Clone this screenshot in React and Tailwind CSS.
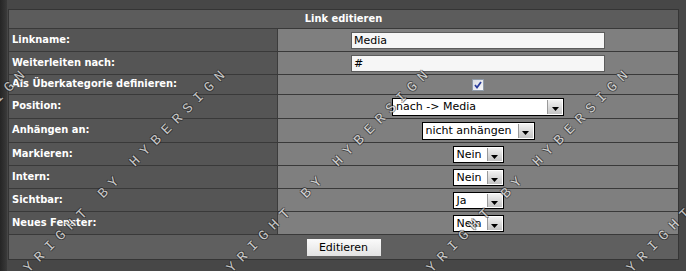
import React from "react";

const Arrow = () => (
  <svg width="7" height="4" viewBox="0 0 7 4" className="mt-[5px]">
    <path d="M0 0H7L3.5 4Z" fill="#000" />
  </svg>
);

const Sel = ({ w, h, text }) => (
  <div className={`flex ${w} ${h} border border-black bg-white`}>
    <span className="flex-1 self-center pl-[3px] text-[11px] leading-none text-black font-['DejaVu_Sans',sans-serif] whitespace-nowrap overflow-hidden">
      {text}
    </span>
    <div className="m-[1px] flex w-[15px] items-center justify-center bg-gradient-to-b from-[#f2f2f2] to-[#c4c4c4] border-l border-[#9a9a9a]">
      <Arrow />
    </div>
  </div>
);

const Row = ({ h, label, children }) => (
  <div className={`flex ${h} border-t border-[#393939]`}>
    <div className="flex w-[268px] items-center bg-[#555555] pl-[3px] text-[11px] font-bold text-white font-['DejaVu_Sans_Condensed','DejaVu_Sans',sans-serif] [font-stretch:condensed]">
      {label}
    </div>
    <div className="flex flex-1 items-center justify-center border-l border-[#3c3c3c] bg-[#7f7f7f]">
      {children}
    </div>
  </div>
);

const Input = ({ value }) => (
  <div className="flex h-[17px] w-[254px] items-center border border-[#5c5c5c] bg-[#f6f6f6] pl-[2px] text-[11px] leading-none text-black font-['DejaVu_Sans',sans-serif]">
    {value}
  </div>
);

const WM = ({ cls }) => (
  <span
    className={`pointer-events-none absolute top-[295px] origin-left -rotate-45 whitespace-nowrap text-[14px] leading-[14px] tracking-[6.6px] text-[#ececec] opacity-75 font-['Liberation_Mono',monospace] [text-shadow:1px_0_0_rgba(20,20,20,0.7),-1px_0_0_rgba(20,20,20,0.7),0_1px_0_rgba(20,20,20,0.7),0_-1px_0_rgba(20,20,20,0.7)] ${cls}`}
  >
    COPYRIGHT BY HYBERSIGN
  </span>
);

export default function App() {
  return (
    <div className="relative flex h-[271px] w-[686px] overflow-hidden bg-[#474747]">
      <div className="w-[7px] bg-gradient-to-r from-[#252525] to-[#3a3a3a]" />
      <div className="pl-[1px] pt-[9px]">
        <div className="flex w-[671px] flex-col border border-[#353535]">
          <div className="flex h-[18px] items-center justify-center bg-[#5c5c5c] text-[11px] font-bold text-white font-['DejaVu_Sans_Condensed','DejaVu_Sans',sans-serif] [font-stretch:condensed]">
            Link editieren
          </div>
          <Row h="h-[23px]" label="Linkname:">
            <Input value="Media" />
          </Row>
          <Row h="h-[23px]" label="Weiterleiten nach:">
            <Input value="#" />
          </Row>
          <Row h="h-[20px]" label="Als Überkategorie definieren:">
            <div className="flex h-[12px] w-[12px] items-center justify-center border border-[#8f9aa8] bg-gradient-to-br from-[#d8dbe2] to-[#f8f8fa]">
              <svg width="8" height="8" viewBox="0 0 8 8">
                <path d="M1 4L3 6.5L7 1" stroke="#2a3c9c" strokeWidth="1.8" fill="none" />
              </svg>
            </div>
          </Row>
          <Row h="h-[24px]" label="Position:">
            <Sel w="w-[172px]" h="h-[18px]" text="nach -> Media" />
          </Row>
          <Row h="h-[24px]" label="Anhängen an:">
            <Sel w="w-[113px]" h="h-[18px]" text="nicht anhängen" />
          </Row>
          <Row h="h-[23px]" label="Markieren:">
            <Sel w="w-[51px]" h="h-[17px]" text="Nein" />
          </Row>
          <Row h="h-[23px]" label="Intern:">
            <Sel w="w-[51px]" h="h-[17px]" text="Nein" />
          </Row>
          <Row h="h-[23px]" label="Sichtbar:">
            <Sel w="w-[51px]" h="h-[17px]" text="Ja" />
          </Row>
          <Row h="h-[23px]" label="Neues Fenster:">
            <Sel w="w-[51px]" h="h-[17px]" text="Nein" />
          </Row>
          <div className="flex h-[25px] items-center justify-center border-t border-[#393939] bg-[#5f5f5f] pt-[1px]">
            <div className="flex h-[17px] w-[74px] items-center justify-center bg-gradient-to-b from-[#fbfbfb] to-[#e2e2e2] text-[11px] leading-none text-black font-['DejaVu_Sans',sans-serif]">
              Editieren
            </div>
          </div>
        </div>
      </div>
      <WM cls="left-[-206px]" />
      <WM cls="left-[-6px]" />
      <WM cls="left-[197px]" />
      <WM cls="left-[397px]" />
      <WM cls="left-[597px]" />
    </div>
  );
}
